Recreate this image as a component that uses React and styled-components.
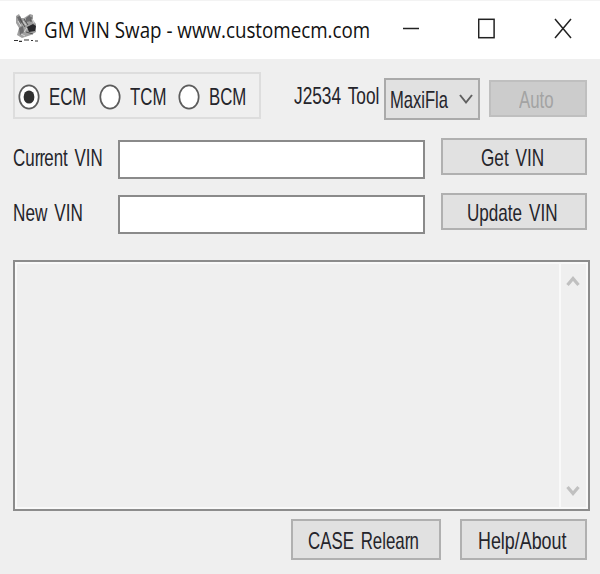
import React, {useState} from 'react';
import styled, {createGlobalStyle} from "styled-components";

const GlobalStyle = createGlobalStyle`
  * {
    box-sizing : border-box;
  }

  body {
    margin : 0;
    background : #efefef;
    font-family : "Liberation Sans", Arial, sans-serif;
  }

  button, input {
    font : inherit;
  }
`;

const Window = styled.div`
  display : flex;
  flex-direction : column;
  width : 600px;
  height : 574px;
  overflow : hidden;
  background : #efefef;
`;

const TitleBar = styled.header`
  display : flex;
  align-items : center;
  height : 59px;
  padding : 0 28px 0 13px;
  border-top : 1px solid #f3f3f3;
  background : #ffffff;
`;

const AppIcon = styled.svg`
  width : 26px;
  height : 30px;
  margin-top : -4px;
`;

const Title = styled.h1`
  width : 325px;
  margin : 0 0 0 5px;
  font-family : "Open Sans", "Noto Sans", sans-serif;
  font-size : 22.5px;
  font-weight : 400;
  line-height : 30px;
  color : #111111;
  white-space : nowrap;
  transform : scaleX(${props => props.$scale});
  transform-origin : left center;
`;

const WindowButtons = styled.div`
  display : flex;
  flex : 1;
  justify-content : space-between;
  align-items : center;
  margin-left : 33px;
`;

const WindowIcon = styled.svg`
  width : 18px;
  height : 22px;
  margin-top : -3px;
  fill : none;
  stroke : #222222;
  stroke-width : 1.5;
`;

/* tall, narrow dialog lettering */
const Caption = styled.span`
  display : block;
  flex : none;
  width : ${props => props.$width}px;
  padding-top : 1px;
  font-size : 24px;
  line-height : 24px;
  word-spacing : 3px;
  color : ${props => props.$color || '#25252b'};
  white-space : nowrap;
  transform : scaleX(${props => props.$scale});
  transform-origin : left center;
`;

const Tight = styled.span`
  letter-spacing : -1.2px;
`;

const Body = styled.main`
  display : flex;
  flex-direction : column;
  padding : 13px 10px 0 13px;
`;

const ToolRow = styled.div`
  display : flex;
  align-items : flex-start;
  height : 47px;
`;

const ModuleGroup = styled.div`
  display : flex;
  align-items : center;
  width : 248px;
  height : 47px;
  padding : 2px 0 0 3px;
  border : 2px solid #dddddd;
`;

const Module = styled.label`
  display : flex;
  align-items : center;
  width : ${props => props.$width}px;
`;

const HiddenRadio = styled.input`
  width : 0;
  height : 0;
  margin : 0;
  appearance : none;
`;

const Dial = styled.svg`
  flex : none;
  width : 22px;
  height : 26px;
  margin-right : 9px;
`;

const ToolLabel = styled.div`
  margin : 11px 0 0 33px;
`;

const ToolSelect = styled.button`
  display : flex;
  align-items : center;
  width : 96px;
  height : 42px;
  margin : 6px 0 0 3px;
  padding : 0 5px 0 4px;
  border : 2px solid #aaaaaa;
  background : #e1e1e1;
`;

const Chevron = styled.svg`
  flex : none;
  width : 14px;
  height : 12px;
  margin-left : ${props => props.$end ? 'auto' : '0'};
  fill : none;
  stroke : ${props => props.$color};
  stroke-width : ${props => props.$weight};
`;

const Button = styled.button`
  display : flex;
  flex : none;
  justify-content : center;
  align-items : center;
  width : ${props => props.$width}px;
  height : ${props => props.$height || 37}px;
  padding : 2px 3px 0 0;
  border : 2px solid #b0b0b0;
  background : #e1e1e1;

  &:disabled {
    border-color : #bfbfbf;
    background : #cccccc;
  }
`;

const AutoBox = styled.div`
  margin : 8px 0 0 9px;
`;

const VinRows = styled.div`
  margin : 19px 0 12px;
`;

const VinRow = styled.div`
  display : flex;
  align-items : flex-start;
  height : 55px;
`;

const VinLabel = styled.label`
  width : 105px;
  padding-top : 7px;
`;

const VinInput = styled.input`
  width : 307px;
  height : 39px;
  margin : 2px 16px 0 0;
  padding : 0 6px;
  border : 2px solid #8a8a8a;
  border-radius : 0;
  background : #ffffff;
  font-size : 20px;
  outline : none;
`;

const LogBox = styled.section`
  display : flex;
  justify-content : flex-end;
  height : 251px;
  border : 2px solid #8c8c8c;
  box-shadow : inset 0 0 0 2px #f9f9f9;
`;

const ScrollTrack = styled.div`
  display : flex;
  flex-direction : column;
  justify-content : space-between;
  align-items : center;
  width : 29px;
  padding : 13px 3px 12px 0;
  border-left : 2px solid #f9f9f9;
`;

const Footer = styled.footer`
  display : flex;
  justify-content : flex-end;
  gap : 19px;
  padding : 8px 3px 0 0;
`;

const modules = [
  { name : 'ECM', width : 81, scale : 0.7 },
  { name : 'TCM', width : 79, scale : 0.7 },
  { name : 'BCM', width : 70, scale : 0.7 },
];

function Radio({ checked }) {
  return (
    <Dial viewBox="0 0 22 26">
      <ellipse cx="11" cy="13" rx="9.7" ry="11.7" fill="#fff" stroke="#5c5c5c" strokeWidth="1.7" />
      {checked && <ellipse cx="11" cy="13" rx="5.4" ry="6.6" fill="#303030" />}
    </Dial>
  );
}

function EngineIcon() {
  return (
    <AppIcon viewBox="0 0 26 30">
      <path d="M3 3 L6 1 L8 5 L11 5 L14 3 L17 1 L20 2 L20 7 L23 11 L23 19 L18 22 L9 25 L4 22 L6 15 L3 10 Z" fill="#a0a0a0" />
      <path d="M4 4 L7 3 L10 9 L7 11 Z M13 5 L17 2 L18 8 L13 9 Z M6 15 L10 13 L11 19 L7 22 Z" fill="#6c6c6e" />
      <path d="M14 14 L20 11 L23 13 L22 18 L16 19 Z" fill="#29292c" />
      <path d="M7 6 L12 14 M11 6 L15 12 M18 4 L18 9 M13 19 L20 21" stroke="#505050" fill="none" />
      <path d="M10 8 L13 12 M5 8 L8 13 M14 15 L11 19 M19 6 L21 10 M8 21 L12 23" stroke="#d4d4d4" fill="none" />
      <path d="M1 27.5 H5 M6 28.3 H9 M11 27 H16 M18 27.5 H20 M22 28 H25" stroke="#333" strokeWidth="1.2" />
    </AppIcon>
  );
}

function App() {

  const [modulevalue, setModuleValue] = useState('ECM');
  const [currentvin, setCurrentVin] = useState('');
  const [newvin, setNewVin] = useState('');

  return (
    <Window>
      <GlobalStyle />
      <TitleBar>
        <EngineIcon />
        <Title $scale={0.834}>GM VIN Swap - www.customecm.com</Title>
        <WindowButtons>
          <WindowIcon viewBox="0 0 18 22"><path d="M1 10.5 H17" /></WindowIcon>
          <WindowIcon viewBox="0 0 18 22"><rect x="0.7" y="1.3" width="15.4" height="18.4" /></WindowIcon>
          <WindowIcon viewBox="0 0 18 22"><path d="M1 1 L17 20 M17 1 L1 20" /></WindowIcon>
        </WindowButtons>
      </TitleBar>
      <Body>
        <ToolRow>
          <ModuleGroup>
            {modules.map(item => (
              <Module key={item.name} $width={item.width}>
                <HiddenRadio
                  type="radio"
                  name="module"
                  checked={modulevalue === item.name}
                  onChange={() => setModuleValue(item.name)} />
                <Radio checked={modulevalue === item.name} />
                <Caption $width={38} $scale={item.scale}>{item.name}</Caption>
              </Module>
            ))}
          </ModuleGroup>
          <ToolLabel><Caption $width={87} $scale={0.72}>J2534 Tool</Caption></ToolLabel>
          <ToolSelect>
            <Caption $width={58} $scale={0.69}>MaxiFla</Caption>
            <Chevron viewBox="0 0 14 12" $end $color="#606060" $weight={2}><path d="M1 2 L7 9.5 L13 2" /></Chevron>
          </ToolSelect>
          <AutoBox>
            <Button $width={98} disabled>
              <Caption $width={36} $scale={0.7} $color="#a3a3a3">Auto</Caption>
            </Button>
          </AutoBox>
        </ToolRow>
        <VinRows>
          <VinRow>
            <VinLabel htmlFor="current">
              <Caption $width={90} $scale={0.705}>Cu<Tight>rr</Tight>ent VIN</Caption>
            </VinLabel>
            <VinInput id="current" value={currentvin} onChange={e => setCurrentVin(e.target.value)} />
            <Button $width={146}><Caption $width={64} $scale={0.715}>Get VIN</Caption></Button>
          </VinRow>
          <VinRow>
            <VinLabel htmlFor="new"><Caption $width={70} $scale={0.715}>New VIN</Caption></VinLabel>
            <VinInput id="new" value={newvin} onChange={e => setNewVin(e.target.value)} />
            <Button $width={146}><Caption $width={91} $scale={0.712}>Update VIN</Caption></Button>
          </VinRow>
        </VinRows>
        <LogBox>
          <ScrollTrack>
            <Chevron viewBox="0 0 14 12" $color="#c0c0c0" $weight={3.2}><path d="M1.5 10 L7 3.5 L12.5 10" /></Chevron>
            <Chevron viewBox="0 0 14 12" $color="#c0c0c0" $weight={3.2}><path d="M1.5 2 L7 8.5 L12.5 2" /></Chevron>
          </ScrollTrack>
        </LogBox>
        <Footer>
          <Button $width={150} $height={41}>
            <Caption $width={113} $scale={0.702}>CASE Relea<Tight>r</Tight>n</Caption>
          </Button>
          <Button $width={127} $height={41}><Caption $width={89} $scale={0.745}>Help/About</Caption></Button>
        </Footer>
      </Body>
    </Window>
  );
}

export default App;
